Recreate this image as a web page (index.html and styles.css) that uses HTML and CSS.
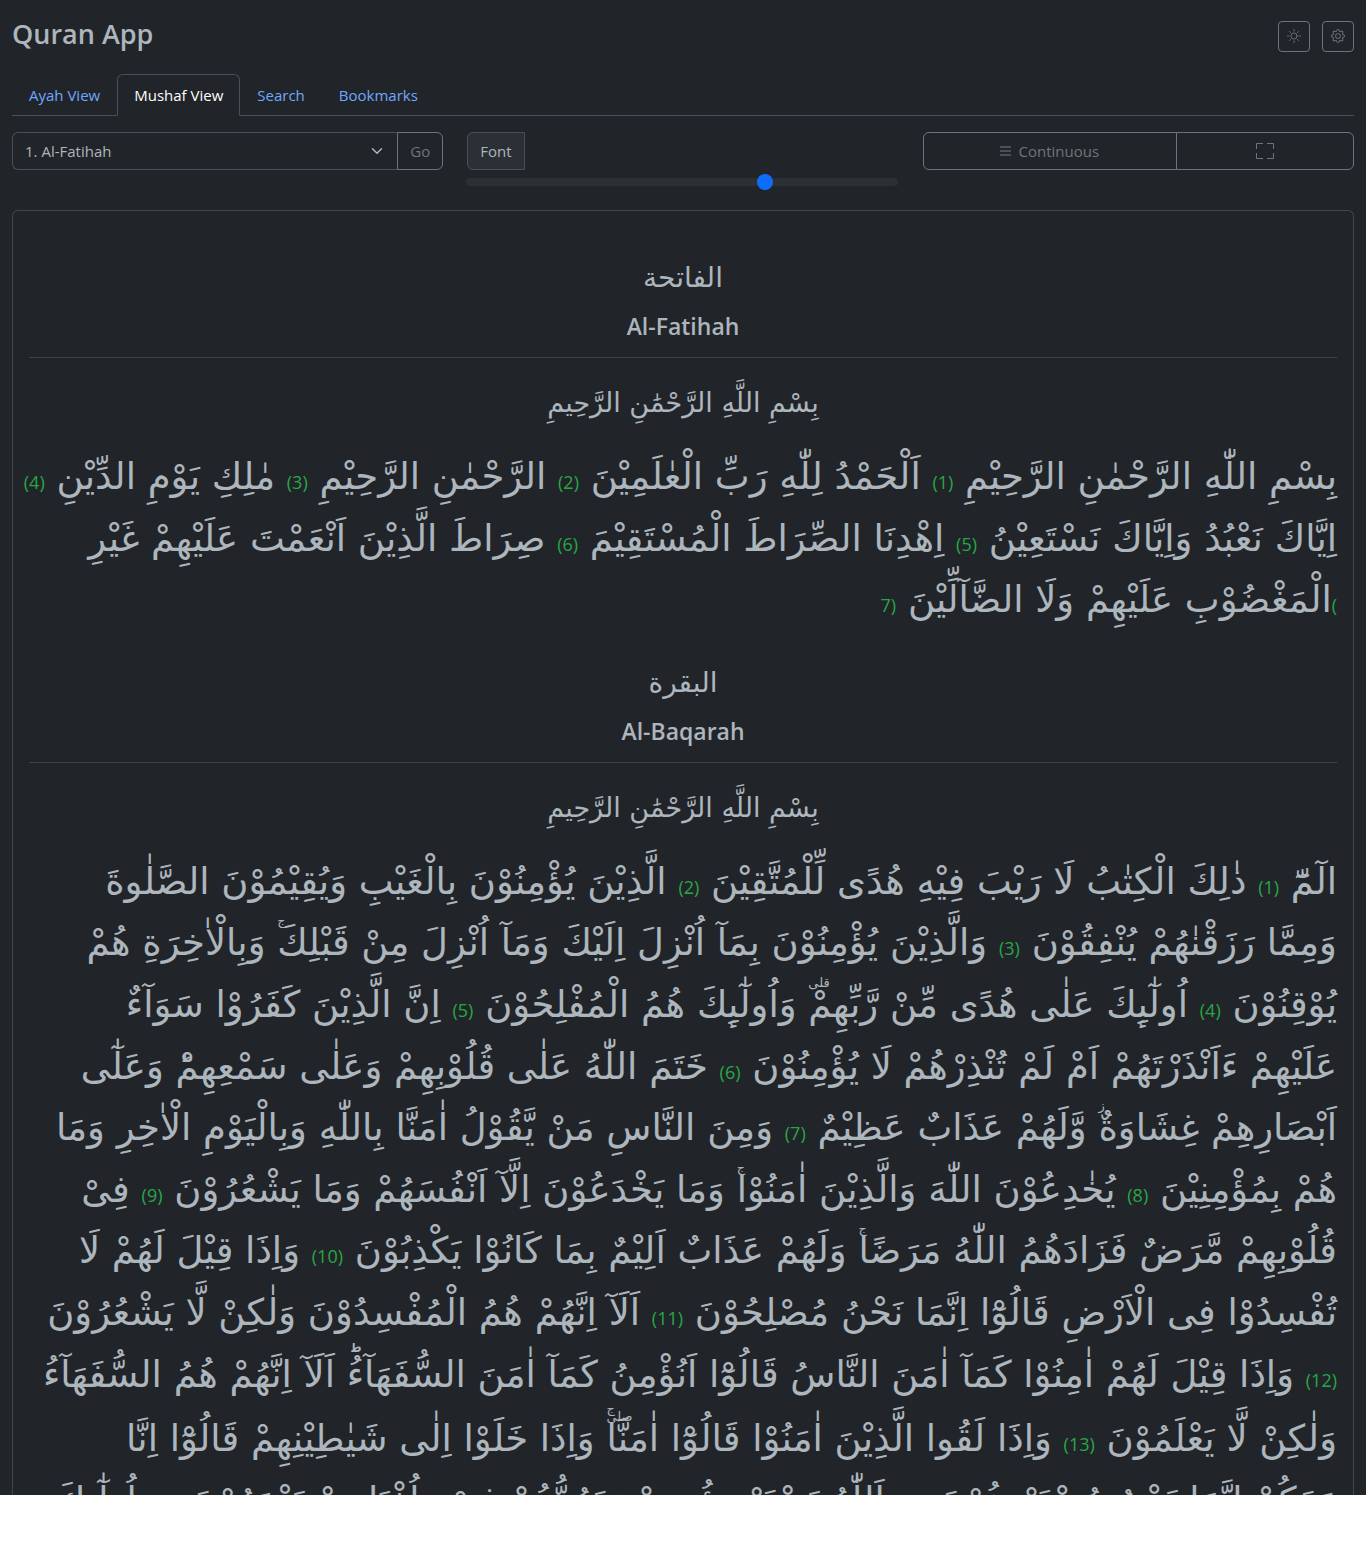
FILE: index.html
```html
<!DOCTYPE html>
<html lang="en">
<head>
<meta charset="utf-8">
<meta name="viewport" content="width=device-width, initial-scale=1">
<title>Quran App</title>
<link rel="stylesheet" href="styles.css">
</head>
<body>
<div class="app">
  <header class="topbar">
    <h1 class="brand">Quran App</h1>
    <div class="topbar-actions">
      <button class="btn btn-icon" type="button" aria-label="Toggle theme">
        <svg width="14" height="14" viewBox="0 0 16 16" fill="none" stroke="currentColor" stroke-linecap="round"><circle cx="8" cy="8" r="3.5"/><path d="M8 .5v2M8 13.500v2M.5 8h2M13.500 8h2M2.700 2.700l1.400 1.400M11.900 11.900l1.400 1.400M13.300 2.700l-1.400 1.400M4.100 11.900l-1.400 1.400"/></svg>
      </button>
      <button class="btn btn-icon" type="button" aria-label="Settings">
        <svg width="14" height="14" viewBox="0 0 16 16" fill="currentColor"><path d="M8 4.754a3.246 3.246 0 1 0 0 6.492 3.246 3.246 0 0 0 0-6.492M5.754 8a2.246 2.246 0 1 1 4.492 0 2.246 2.246 0 0 1-4.492 0"/><path d="M9.796 1.343c-.527-1.790-3.065-1.790-3.592 0l-.094.319a.873.873 0 0 1-1.255.520l-.292-.160c-1.640-.892-3.433.902-2.540 2.541l.159.292a.873.873 0 0 1-.520 1.255l-.319.094c-1.790.527-1.790 3.065 0 3.592l.319.094a.873.873 0 0 1 .520 1.255l-.160.292c-.892 1.640.901 3.434 2.541 2.540l.292-.159a.873.873 0 0 1 1.255.520l.094.319c.527 1.790 3.065 1.790 3.592 0l.094-.319a.873.873 0 0 1 1.255-.520l.292.160c1.640.893 3.434-.902 2.540-2.541l-.159-.292a.873.873 0 0 1 .520-1.255l.319-.094c1.790-.527 1.790-3.065 0-3.592l-.319-.094a.873.873 0 0 1-.520-1.255l.160-.292c.893-1.640-.902-3.433-2.541-2.540l-.292.159a.873.873 0 0 1-1.255-.520zm-2.633.283c.246-.835 1.428-.835 1.674 0l.094.319a1.873 1.873 0 0 0 2.693 1.115l.291-.160c.764-.415 1.600.420 1.184 1.185l-.159.292a1.873 1.873 0 0 0 1.116 2.692l.318.094c.835.246.835 1.428 0 1.674l-.319.094a1.873 1.873 0 0 0-1.115 2.693l.160.291c.415.764-.420 1.600-1.185 1.184l-.291-.159a1.873 1.873 0 0 0-2.693 1.116l-.094.318c-.246.835-1.428.835-1.674 0l-.094-.319a1.873 1.873 0 0 0-2.692-1.115l-.292.160c-.764.415-1.600-.420-1.184-1.185l.159-.291A1.873 1.873 0 0 0 1.945 8.930l-.319-.094c-.835-.246-.835-1.428 0-1.674l.319-.094A1.873 1.873 0 0 0 3.060 4.377l-.160-.292c-.415-.764.420-1.600 1.185-1.184l.292.159a1.873 1.873 0 0 0 2.692-1.115z"/></svg>
      </button>
    </div>
  </header>

  <nav class="tabs">
    <a class="tab" href="#ayah">Ayah View</a>
    <a class="tab tab-active" href="#mushaf" aria-current="page">Mushaf View</a>
    <a class="tab" href="#search">Search</a>
    <a class="tab" href="#bookmarks">Bookmarks</a>
  </nav>

  <div class="toolbar">
    <div class="group">
      <select class="select" aria-label="Surah">
        <option>1. Al-Fatihah</option>
        <option>2. Al-Baqarah</option>
      </select>
      <button class="btn btn-go" type="button">Go</button>
    </div>
    <div class="font-group">
      <label class="addon" for="font-size">Font</label>
      <input class="range" id="font-size" type="range" min="14" max="34" value="28">
    </div>
    <div class="group">
      <button class="btn btn-mode" type="button">
        <svg class="bars" width="11" height="10" viewBox="0 0 11 10" fill="currentColor"><path d="M0 0h11v2H0zM0 4h11v2H0zM0 8h11v2H0z"/></svg>
        Continuous
      </button>
      <button class="btn btn-full" type="button" aria-label="Full screen">
        <svg width="18" height="16" viewBox="0 0 18 16" fill="none" stroke="currentColor"><path d="M.5 6V.5H7M11 .5h6.500V6M17.500 10v5.500H11M7 15.500H.5V10"/></svg>
      </button>
    </div>
  </div>

  <main class="reader">
    <section class="surah">
      <header class="surah-head">
        <p class="surah-arabic" lang="ar" dir="rtl">الفاتحة</p>
        <h2 class="surah-name">Al-Fatihah</h2>
      </header>
      <p class="basmala" lang="ar" dir="rtl">بِسْمِ اللَّهِ الرَّحْمَٰنِ الرَّحِيمِ</p>
      <p class="verses" lang="ar" dir="rtl">
        بِسْمِ اللّٰهِ الرَّحْمٰنِ الرَّحِیْمِ <span class="num">(1)</span> اَلْحَمْدُ لِلّٰهِ رَبِّ الْعٰلَمِیْنَ <span class="num">(2)</span> الرَّحْمٰنِ الرَّحِیْمِ <span class="num">(3)</span> مٰلِكِ یَوْمِ الدِّیْنِ <span class="num">(4)</span><br>
        اِیَّاكَ نَعْبُدُ وَاِیَّاكَ نَسْتَعِیْنُ <span class="num">(5)</span> اِهْدِنَا الصِّرَاطَ الْمُسْتَقِیْمَ <span class="num">(6)</span> صِرَاطَ الَّذِیْنَ اَنْعَمْتَ عَلَیْهِمْ غَیْرِ<br>
        <span class="num">)</span>الْمَغْضُوْبِ عَلَیْهِمْ وَلَا الضَّآلِّیْنَ <span class="num">(7</span>
      </p>
    </section>

    <section class="surah">
      <header class="surah-head">
        <p class="surah-arabic" lang="ar" dir="rtl">البقرة</p>
        <h2 class="surah-name">Al-Baqarah</h2>
      </header>
      <p class="basmala" lang="ar" dir="rtl">بِسْمِ اللَّهِ الرَّحْمَٰنِ الرَّحِيمِ</p>
      <p class="verses" lang="ar" dir="rtl">
        الٓمّٓ <span class="num">(1)</span> ذٰلِكَ الْكِتٰبُ لَا رَیْبَ فِیْهِ هُدًی لِّلْمُتَّقِیْنَ <span class="num">(2)</span> الَّذِیْنَ یُؤْمِنُوْنَ بِالْغَیْبِ وَیُقِیْمُوْنَ الصَّلٰوةَ<br>
        وَمِمَّا رَزَقْنٰهُمْ یُنْفِقُوْنَ <span class="num">(3)</span> وَالَّذِیْنَ یُؤْمِنُوْنَ بِمَآ اُنْزِلَ اِلَیْكَ وَمَآ اُنْزِلَ مِنْ قَبْلِكَ<span class="pause">ج</span> وَبِالْاٰخِرَةِ هُمْ<br>
        یُوْقِنُوْنَ <span class="num">(4)</span> اُولٰٓىِٕكَ عَلٰی هُدًی مِّنْ رَّبِّهِمْ<span class="pause">قلى</span> وَاُولٰٓىِٕكَ هُمُ الْمُفْلِحُوْنَ <span class="num">(5)</span> اِنَّ الَّذِیْنَ كَفَرُوْا سَوَآءٌ<br>
        عَلَیْهِمْ ءَاَنْذَرْتَهُمْ اَمْ لَمْ تُنْذِرْهُمْ لَا یُؤْمِنُوْنَ <span class="num">(6)</span> خَتَمَ اللّٰهُ عَلٰی قُلُوْبِهِمْ وَعَلٰی سَمْعِهِمْؕ وَعَلٰٓی<br>
        اَبْصَارِهِمْ غِشَاوَةٌ<span class="pause">ز</span> وَّلَهُمْ عَذَابٌ عَظِیْمٌ <span class="num">(7)</span> وَمِنَ النَّاسِ مَنْ یَّقُوْلُ اٰمَنَّا بِاللّٰهِ وَبِالْیَوْمِ الْاٰخِرِ وَمَا<br>
        هُمْ بِمُؤْمِنِیْنَ <span class="num">(8)</span> یُخٰدِعُوْنَ اللّٰهَ وَالَّذِیْنَ اٰمَنُوْا<span class="pause">ج</span> وَمَا یَخْدَعُوْنَ اِلَّآ اَنْفُسَهُمْ وَمَا یَشْعُرُوْنَ <span class="num">(9)</span> فِیْ<br>
        قُلُوْبِهِمْ مَّرَضٌ فَزَادَهُمُ اللّٰهُ مَرَضًا<span class="pause">ج</span> وَلَهُمْ عَذَابٌ اَلِیْمٌ بِمَا كَانُوْا یَكْذِبُوْنَ <span class="num">(10)</span> وَاِذَا قِیْلَ لَهُمْ لَا<br>
        تُفْسِدُوْا فِی الْاَرْضِ قَالُوْٓا اِنَّمَا نَحْنُ مُصْلِحُوْنَ <span class="num">(11)</span> اَلَآ اِنَّهُمْ هُمُ الْمُفْسِدُوْنَ وَلٰكِنْ لَّا یَشْعُرُوْنَ<br>
        <span class="num">(12)</span> وَاِذَا قِیْلَ لَهُمْ اٰمِنُوْا كَمَآ اٰمَنَ النَّاسُ قَالُوْٓا اَنُؤْمِنُ كَمَآ اٰمَنَ السُّفَهَآءُؕ اَلَآ اِنَّهُمْ هُمُ السُّفَهَآءُ<br>
        وَلٰكِنْ لَّا یَعْلَمُوْنَ <span class="num">(13)</span> وَاِذَا لَقُوا الَّذِیْنَ اٰمَنُوْا قَالُوْٓا اٰمَنَّا<span class="pause">ج<br>صلى</span> وَاِذَا خَلَوْا اِلٰی شَیٰطِیْنِهِمْ قَالُوْٓا اِنَّا<br>
        مَعَكُمْ اِنَّمَا نَحْنُ مُسْتَهْزِءُوْنَ <span class="num">(14)</span> اَللّٰهُ یَسْتَهْزِئُ بِهِمْ وَیَمُدُّهُمْ فِیْ طُغْیَانِهِمْ یَعْمَهُوْنَ <span class="num">(15)</span> اُولٰٓىِٕكَ
      </p>
    </section>
  </main>
</div>
</body>
</html>
```
FILE: styles.css
```css
*,
*::before,
*::after {
  box-sizing: border-box;
}

body {
  margin: 0;
  background: #fff;
  color: #adb5bd;
  font: 15px/24px "Open Sans", "Noto Sans", sans-serif;
}

.app {
  display: flex;
  flex-direction: column;
  height: calc(100vh - 49px);
  padding: 15px 12px 0;
  overflow: hidden;
  background: #212529;
}

.topbar {
  display: flex;
  justify-content: space-between;
  align-items: center;
  flex: none;
  height: 42px;
  margin-bottom: 17px;
}

.brand {
  margin: 0;
  padding-bottom: 4px;
  font-size: 27px;
  line-height: 34px;
  font-weight: 600;
}

.topbar-actions {
  display: flex;
  gap: 12px;
}

.btn {
  display: flex;
  align-items: center;
  justify-content: center;
  border: 1px solid #6c757d;
  border-radius: 6px;
  padding: 0 12px;
  background: transparent;
  color: #6c757d;
  font: inherit;
}

.btn-icon {
  width: 32px;
  height: 31px;
  padding: 0;
  border-radius: 4px;
}

.tabs {
  display: flex;
  flex: none;
  border-bottom: 1px solid #495057;
}

.tab {
  margin-bottom: -1px;
  padding: 8px 16px;
  border: 1px solid transparent;
  border-radius: 6px 6px 0 0;
  color: #6ea8fe;
  text-decoration: none;
}

.tab-active {
  border-color: #495057 #495057 #212529;
  background: #212529;
  color: #fff;
}

.toolbar {
  display: grid;
  grid-template-columns: repeat(3, 1fr);
  align-items: start;
  flex: none;
  gap: 24px;
  margin: 16px 0;
}

.group {
  display: flex;
  height: 38px;
}

.select {
  flex: 1;
  padding: 0 12px;
  border: 1px solid #495057;
  border-right: 0;
  border-radius: 6px 0 0 6px;
  appearance: none;
  background: url("data:image/svg+xml,%3Csvg xmlns='http://www.w3.org/2000/svg' viewBox='0 0 16 16'%3E%3Cpath fill='none' stroke='%23adb5bd' stroke-linecap='round' stroke-linejoin='round' stroke-width='2' d='m2 5 6 6 6-6'/%3E%3C/svg%3E") no-repeat right 14px center / 12px 12px;
  color: #adb5bd;
  font: inherit;
}

.btn-go {
  width: 46px;
  border-radius: 0 6px 6px 0;
}

.font-group {
  display: flex;
  flex-direction: column;
  align-items: flex-start;
}

.addon {
  padding: 6px 12px;
  border: 1px solid #495057;
  border-radius: 6px 0 0 6px;
  background: #2b3035;
}

.range {
  width: 100%;
  height: 24px;
  margin: 0 0 0 -1px;
  appearance: none;
  background: transparent;
}

.range::-webkit-slider-runnable-track {
  height: 8px;
  border-radius: 16px;
  background: #2b3035;
}

.range::-webkit-slider-thumb {
  width: 16px;
  height: 16px;
  margin-top: -4px;
  appearance: none;
  border-radius: 50%;
  background: #0d6efd;
}

.btn-mode {
  flex: 3 1 0;
  gap: 7px;
  border-radius: 6px 0 0 6px;
}

.bars {
  color: #495057;
}

.btn-full {
  flex: 2 1 0;
  margin-left: -1px;
  border-radius: 0 6px 6px 0;
}

.reader {
  flex: 1;
  min-height: 0;
  padding: 16px;
  overflow: hidden;
  border: 1px solid #42464a;
  border-bottom: 0;
  border-radius: 6px 6px 0 0;
}

.surah-head {
  padding-top: 24px;
  border-bottom: 1px solid #404447;
  text-align: center;
}

.surah-arabic {
  margin: 0;
  font: 28px/54px "DejaVu Sans", sans-serif;
}

.surah-name {
  margin: 0;
  padding: 5px 0 15px;
  font-size: 23px;
  line-height: 32px;
  font-weight: 600;
}

.basmala {
  margin: 0;
  padding: 17px 0 15px;
  font: 27px/56px "DejaVu Sans", sans-serif;
  text-align: center;
}

.verses {
  margin: 0;
  padding-bottom: 1px;
  font-family: "DejaVu Sans", sans-serif;
  font-size: 37px;
  line-height: 1.665;
  white-space: nowrap;
}

.num {
  color: #28a745;
  font: 18px/1 "Open Sans", "Noto Sans", sans-serif;
}

/* Small pause sign raised over the last letter of a word */
.pause {
  display: inline-block;
  width: 0;
  direction: ltr;
  font-size: 13px;
  line-height: 8px;
  vertical-align: 30px;
}
```
